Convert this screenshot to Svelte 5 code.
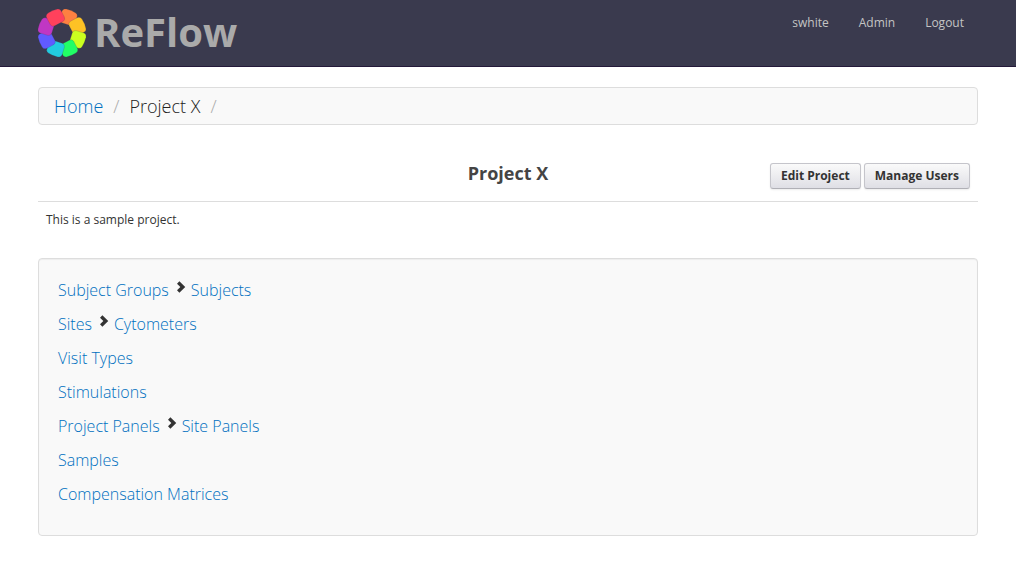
<script>
  const petals = ['#fe8041', '#fec225', '#cbff1f', '#21fe66', '#22cbe0', '#605bff', '#c037c3', '#ff415c'];
  const account = ['swhite', 'Admin', 'Logout'];
  const rows = [
    ['Subject Groups', 'Subjects'],
    ['Sites', 'Cytometers'],
    ['Visit Types'],
    ['Stimulations'],
    ['Project Panels', 'Site Panels'],
    ['Samples'],
    ['Compensation Matrices']
  ];
</script>

<header>
  <div class="container bar">
    <a class="brand" href="#home">
      <svg width="48" height="48" viewBox="-24 -24 48 48" aria-hidden="true">
        {#each petals as color, i}
          <path
            transform="rotate({22.5 + i * 45})"
            d="M-5.2 -23.8Q0 -24.8 5 -23.8Q7.4 -23.2 7.7 -21L8.3 -14Q8.4 -11 5.6 -10.3L-4 -9.4Q-7 -9.4 -7.6 -12L-8.4 -20.4Q-8.2 -23.2 -5.2 -23.8Z"
            fill={color}
            stroke="#3a3a4e"
            stroke-opacity="0.35"
            stroke-width="0.5"
          />
        {/each}
      </svg>
      <span>ReFlow</span>
    </a>
    <nav aria-label="Account">
      {#each account as item}
        <a href="#{item}">{item}</a>
      {/each}
    </nav>
  </div>
</header>

<main class="container">
  <nav class="breadcrumb" aria-label="Breadcrumb">
    <a href="#home">Home</a><span class="divider">/</span><span>Project X</span><span class="divider">/</span>
  </nav>

  <div class="heading">
    <h1>Project X</h1>
    <div class="actions">
      <button type="button">Edit Project</button>
      <button type="button">Manage Users</button>
    </div>
  </div>
  <p>This is a sample project.</p>

  <ul>
    {#each rows as row}
      <li>
        {#each row as item, i}
          {#if i > 0}
            <svg class="chevron" width="10" height="12" viewBox="0 0 10 12" aria-hidden="true">
              <path d="M2.2 1.6L6.8 6L2.2 10.4" fill="none" stroke="#333" stroke-width="3.4" />
            </svg>
          {/if}
          <a href="#{item}">{item}</a>
        {/each}
      </li>
    {/each}
  </ul>
</main>

<style>
  :global(body) {
    background: #fff;
    color: #333;
    font: 12px/18px 'Open Sans', sans-serif;
  }
  a {
    color: #0070c0;
    text-decoration: none;
  }
  .container {
    max-width: 940px;
    margin: 0 auto;
  }
  header {
    background: #3a3a4e;
    border-bottom: 1px solid #24193a;
  }
  .bar {
    display: flex;
    justify-content: space-between;
    align-items: flex-start;
    height: 66px;
  }
  .brand {
    display: flex;
    gap: 8px;
    padding-top: 9px;
    color: #aaa;
    font-size: 40px;
    font-weight: 700;
    line-height: 46px;
  }
  .bar nav {
    display: flex;
    gap: 30px;
    padding: 14px 14px 0 0;
  }
  .bar nav a {
    color: #c4c4c4;
  }
  .breadcrumb {
    display: flex;
    margin-top: 20px;
    padding: 6px 15px;
    border: 1px solid #ddd;
    border-radius: 4px;
    background: #f9f9f9;
    color: #222;
    font-size: 18px;
    font-weight: 300;
    line-height: 24px;
  }
  .divider {
    padding: 0 10px;
    color: #aaa;
  }
  .heading {
    display: grid;
    grid-template-columns: 1fr auto 1fr;
    align-items: start;
    margin-top: 36px;
    padding: 0 8px 12px;
    border-bottom: 1px solid #ddd;
  }
  h1 {
    grid-column: 2;
    margin: 0;
    color: #444;
    font-size: 18px;
    line-height: 24px;
  }
  .actions {
    display: flex;
    justify-content: flex-end;
    gap: 3px;
    padding-top: 2px;
  }
  button {
    padding: 3px 10px;
    border: 1px solid #c5c5cb;
    border-bottom-color: #b0b0b6;
    border-radius: 3px;
    background: linear-gradient(#fafafa, #dfdfe5);
    box-shadow: 0 1px 2px rgba(0, 0, 0, 0.08);
    color: #333;
    font: 700 12px/18px 'Open Sans', sans-serif;
  }
  p {
    margin: 9px 8px 29px;
  }
  ul {
    margin: 0;
    padding: 14px 19px 24px;
    border: 1px solid #ddd;
    border-radius: 4px;
    background: #f9f9f9;
    box-shadow: inset 0 1px 1px rgba(0, 0, 0, 0.05);
    list-style: none;
    font-size: 16px;
    font-weight: 300;
    line-height: 34px;
  }
  li {
    display: flex;
    align-items: center;
  }
  .chevron {
    margin: 0 5px 6px 7px;
  }
</style>
